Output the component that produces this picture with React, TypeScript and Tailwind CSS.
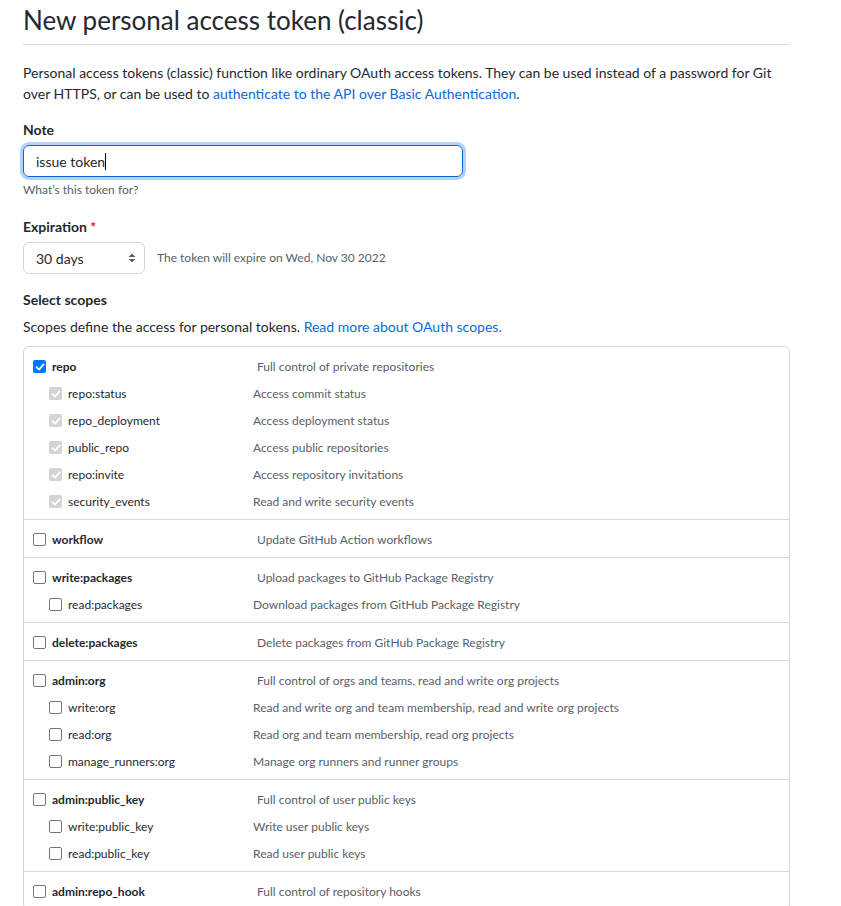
const font = { fontFamily: 'Lato, "Noto Sans", sans-serif' };

type Scope = { name: string; desc: string; children?: { name: string; desc: string }[]; checked?: boolean };

const scopes: Scope[] = [
	{
		name: "repo",
		desc: "Full control of private repositories",
		checked: true,
		children: [
			{ name: "repo:status", desc: "Access commit status" },
			{ name: "repo_deployment", desc: "Access deployment status" },
			{ name: "public_repo", desc: "Access public repositories" },
			{ name: "repo:invite", desc: "Access repository invitations" },
			{ name: "security_events", desc: "Read and write security events" },
		],
	},
	{ name: "workflow", desc: "Update GitHub Action workflows" },
	{
		name: "write:packages",
		desc: "Upload packages to GitHub Package Registry",
		children: [{ name: "read:packages", desc: "Download packages from GitHub Package Registry" }],
	},
	{ name: "delete:packages", desc: "Delete packages from GitHub Package Registry" },
	{
		name: "admin:org",
		desc: "Full control of orgs and teams, read and write org projects",
		children: [
			{ name: "write:org", desc: "Read and write org and team membership, read and write org projects" },
			{ name: "read:org", desc: "Read org and team membership, read org projects" },
			{ name: "manage_runners:org", desc: "Manage org runners and runner groups" },
		],
	},
	{
		name: "admin:public_key",
		desc: "Full control of user public keys",
		children: [
			{ name: "write:public_key", desc: "Write user public keys" },
			{ name: "read:public_key", desc: "Read user public keys" },
		],
	},
	{ name: "admin:repo_hook", desc: "Full control of repository hooks" },
];

function Box({ state }: { state: "on" | "off" | "disabled" }) {
	if (state === "off") {
		return <span className="block w-[13px] h-[13px] rounded-[2px] border border-[#767676] bg-white shrink-0" />;
	}
	const bg = state === "on" ? "bg-[#0075ff]" : "bg-[#d4d4d4]";
	return (
		<span className={`flex items-center justify-center w-[13px] h-[13px] rounded-[2px] ${bg} shrink-0`}>
			<svg width="10" height="10" viewBox="0 0 10 10" fill="none">
				<path d="M1.5 5.2 L4 7.6 L8.6 2.4" stroke="white" strokeWidth="1.8" strokeLinecap="round" strokeLinejoin="round" />
			</svg>
		</span>
	);
}

function ScopeGroup({ scope, last }: { scope: Scope; last: boolean }) {
	return (
		<div className={`py-[5px] ${last ? "" : "border-b border-[#d0d7de]"}`}>
			<div className="flex items-center h-[27px] pt-[2px] text-[12px]">
				<div className="flex items-center w-[233px] pl-[9px] gap-[6px]">
					<Box state={scope.checked ? "on" : "off"} />
					<span className="font-bold text-[#24292f]">{scope.name}</span>
				</div>
				<span className="text-[#57606a]">{scope.desc}</span>
			</div>
			{scope.children?.map((c) => (
				<div key={c.name} className="flex items-center h-[27px] pt-[2px] text-[12px]">
					<div className="flex items-center w-[229px] pl-[25px] gap-[6px]">
						<Box state={scope.checked ? "disabled" : "off"} />
						<span className="text-[#24292f]">{c.name}</span>
					</div>
					<span className="text-[#57606a]">{c.desc}</span>
				</div>
			))}
		</div>
	);
}

export default function App() {
	return (
		<div className="min-h-dvh bg-white text-[#24292f] pl-[23px] pt-[4px]" style={font}>
			<div className="w-[767px]">
				<h1 className="text-[26px] leading-[32px] pb-[8px] border-b border-[#d8dee4] font-normal">
					New personal access token (classic)
				</h1>
				<p className="mt-[17px] text-[14px] leading-[21px]">
					Personal access tokens (classic) function like ordinary OAuth access tokens. They can be used instead of a password for Git over HTTPS, or can be used to{" "}
					<a className="text-[#0969da]">authenticate to the API over Basic Authentication</a>.
				</p>

				<div className="mt-[15px]">
					<label className="block text-[14px] font-bold leading-[21px]">Note</label>
					<div className="mt-[5px] w-[440px] h-[32px] rounded-[6px] border border-[#0969da] ring-[3px] ring-[#0969da]/30 flex items-center px-[12px] text-[14px]">
						issue token
						<span className="inline-block w-px h-[17px] bg-black" />
					</div>
					<p className="mt-[4px] text-[12px] text-[#57606a] leading-[18px]">What’s this token for?</p>
				</div>

				<div className="mt-[17px]">
					<label className="block text-[14px] font-bold leading-[21px]">
						Expiration <span className="text-[#cf222e]">*</span>
					</label>
					<div className="mt-[5px] flex items-center gap-[12px]">
						<div className="w-[122px] h-[32px] rounded-[6px] border border-[#d0d7de] flex items-center justify-between pl-[12px] pr-[7px] text-[14px]">
							<span>30 days</span>
							<svg width="10" height="12" viewBox="0 0 10 12">
								<path d="M5 1.5 L8.5 5 L1.5 5 Z" fill="#57606a" />
								<path d="M5 10.5 L8.5 7 L1.5 7 Z" fill="#57606a" />
							</svg>
						</div>
						<span className="text-[12px] text-[#57606a]">The token will expire on Wed, Nov 30 2022</span>
					</div>
				</div>

				<div className="mt-[15px]">
					<h3 className="text-[14px] font-bold leading-[21px]">Select scopes</h3>
					<p className="mt-[6px] text-[14px] leading-[21px]">
						Scopes define the access for personal tokens. <a className="text-[#0969da]">Read more about OAuth scopes.</a>
					</p>
					<div className="mt-[9px] border border-[#d0d7de] rounded-[6px]">
						{scopes.map((s, i) => (
							<ScopeGroup key={s.name} scope={s} last={i === scopes.length - 1} />
						))}
					</div>
				</div>
			</div>
		</div>
	);
}
